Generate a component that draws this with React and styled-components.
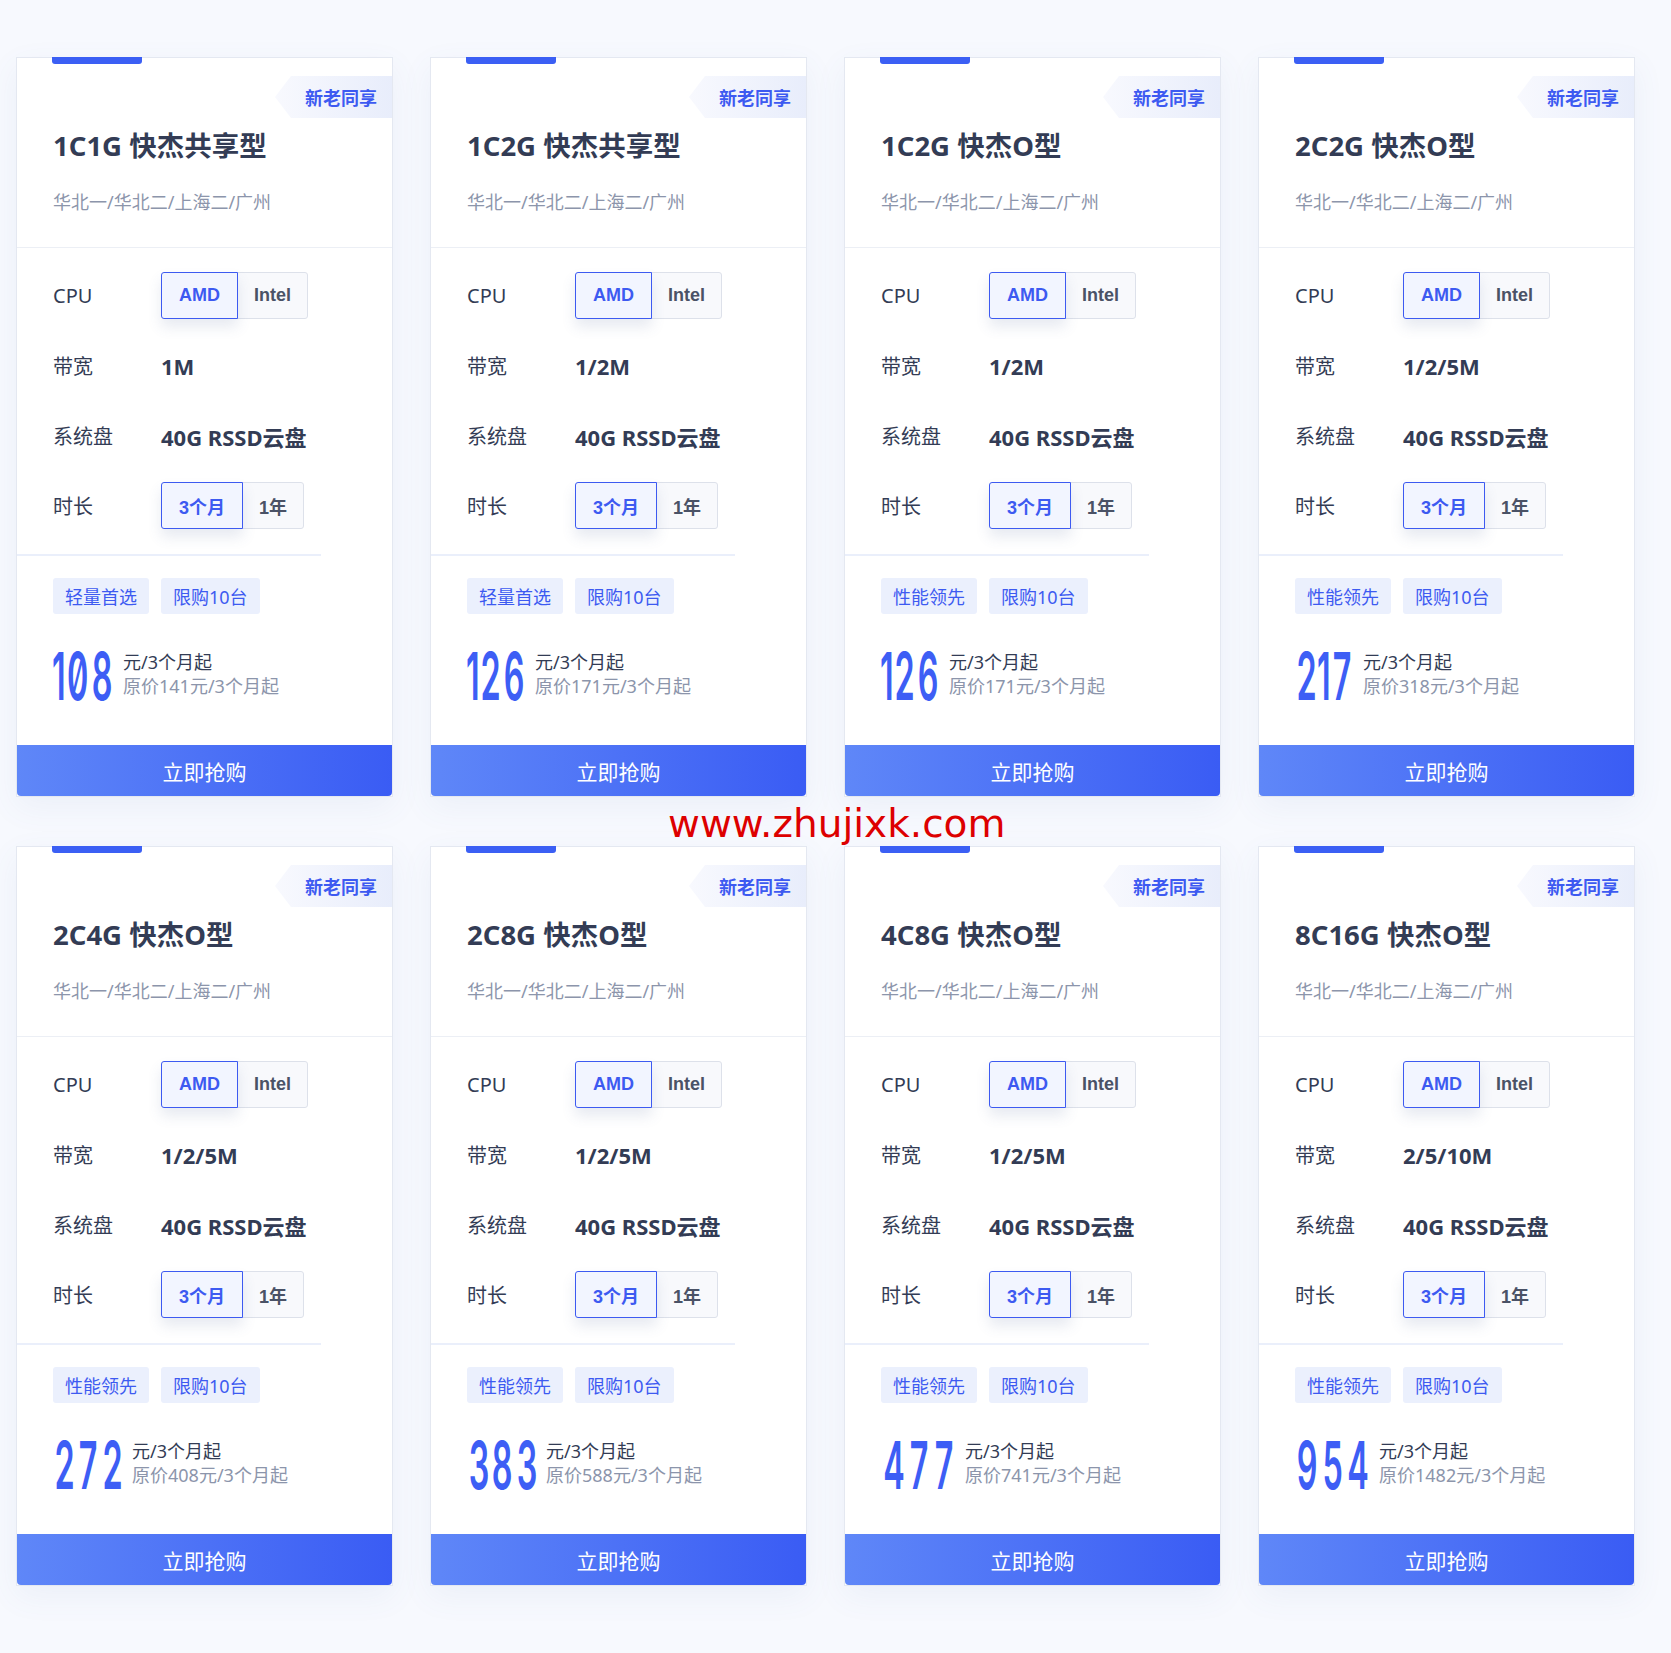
import React from 'react';
import styled, { createGlobalStyle } from 'styled-components';

const GlobalStyle = createGlobalStyle`
  html, body {
    margin: 0;
    padding: 0;
    background: #f7f9fe;
  }
  body {
    font-family: "Noto Sans", "Noto Sans CJK SC", sans-serif;
    color: #333c55;
  }
`;

const Page = styled.div`
  position: relative;
  width: 1671px;
  min-height: 1653px;
  box-sizing: border-box;
  padding: 57px 0 67px 16px;
`;

const Grid = styled.div`
  display: grid;
  grid-template-columns: repeat(4, 377px);
  column-gap: 37px;
  row-gap: 49px;
`;

const Card = styled.div`
  position: relative;
  height: 740px;
  box-sizing: border-box;
  display: flex;
  flex-direction: column;
  background: #fff;
  border: 1px solid #e4e8f1;
  box-shadow: 0 10px 30px rgba(90, 110, 170, 0.07);
`;

const TopBar = styled.div`
  position: absolute;
  top: -1px;
  left: 35px;
  width: 90px;
  height: 7px;
  background: #3b5ff4;
  border-radius: 0 0 3px 3px;
`;

const Badge = styled.div`
  position: absolute;
  top: 18px;
  right: 0;
  width: 117px;
  height: 42px;
  box-sizing: border-box;
  padding-left: 30px;
  display: flex;
  align-items: center;
  font-size: 18px;
  font-weight: 700;
  color: #3d5af1;
  background: linear-gradient(90deg, #f8f9fe 0%, #e8edfb 100%);
  clip-path: polygon(16px 0, 100% 0, 100% 100%, 16px 100%, 0 50%);
`;

const Header = styled.div`
  padding: 70px 36px 33px;
  border-bottom: 1px solid #eceff5;
`;

const Title = styled.h3`
  margin: 0;
  font-size: 27.5px;
  line-height: 36px;
  font-weight: 700;
  color: #333c55;
`;

const Regions = styled.div`
  margin-top: 26px;
  font-size: 18px;
  line-height: 24px;
  color: #8c95ab;
`;

const Specs = styled.div`
  display: grid;
  row-gap: 23px;
  padding: 24px 36px 25px;
`;

const SpecRow = styled.div`
  display: flex;
  align-items: center;
  height: 47px;
`;

const Label = styled.div`
  width: 108px;
  font-size: 20px;
  color: #333c55;
`;

const Value = styled.div`
  font-size: 22px;
  font-weight: 700;
  color: #333c55;
`;

const Segment = styled.div`
  display: flex;
  height: 47px;
`;

const SegItem = styled.div`
  position: relative;
  z-index: ${(p) => (p.$active ? 1 : 0)};
  width: ${(p) => p.$w}px;
  box-sizing: border-box;
  display: flex;
  align-items: center;
  justify-content: center;
  font-family: "Liberation Sans", "Noto Sans CJK SC", sans-serif;
  font-size: 18px;
  font-weight: 700;
  border: 1px solid ${(p) => (p.$active ? '#3d5af1' : '#dde1ea')};
  background: ${(p) => (p.$active ? '#f2f5ff' : '#f8f9fc')};
  color: ${(p) => (p.$active ? '#3d5af1' : '#4a5266')};
  box-shadow: ${(p) => (p.$active ? '0 8px 14px rgba(70, 90, 150, 0.13)' : 'none')};
  border-radius: 3px 0 0 3px;

  & + & {
    margin-left: -1px;
    border-radius: 0 3px 3px 0;
  }
`;

const Rule = styled.div`
  width: 304px;
  height: 2px;
  background: #eaeffb;
`;

const Tags = styled.div`
  display: flex;
  gap: 12px;
  margin-top: 22px;
  padding: 0 36px;
`;

const Tag = styled.span`
  height: 36px;
  padding: 0 12px;
  display: inline-flex;
  align-items: center;
  font-size: 18px;
  color: #3d5af1;
  background: #ebf0fd;
  border-radius: 3px;
`;

const PriceRow = styled.div`
  display: flex;
  align-items: center;
  height: 66px;
  margin-top: 29px;
  padding-left: 36px;
`;

const Amount = styled.div`
  display: flex;
  height: 66px;
`;

const Digit = styled.span`
  display: inline-flex;
  justify-content: center;
  width: ${(p) => p.$w}px;
  font-family: Inter, "Liberation Sans", sans-serif;
  font-feature-settings: "zero" 1;
  font-size: 66px;
  line-height: 66px;
  font-weight: 600;
  color: #3d5ef5;

  span {
    display: inline-block;
    transform: scaleX(0.49);
  }
`;

const PriceNote = styled.div`
  margin-left: 8px;
  margin-bottom: 5px;
  font-size: 18px;
  line-height: 24px;
  color: #333c55;

  small {
    display: block;
    font-size: 18px;
    color: #8c95ab;
  }
`;

const Buy = styled.button`
  margin-top: auto;
  height: 51px;
  width: 100%;
  border: none;
  border-radius: 0 0 4px 4px;
  background: linear-gradient(90deg, #5f87f8 0%, #3a5cf4 100%);
  color: #fff;
  font-family: inherit;
  font-size: 21px;
  cursor: pointer;
`;

const Watermark = styled.div`
  position: absolute;
  left: 668px;
  top: 804px;
  font-family: "DejaVu Sans", sans-serif;
  font-size: 39px;
  line-height: 1;
  color: #dd0000;
  pointer-events: none;
`;

const digitWidth = { 0: 25, 1: 12, 2: 23, 3: 23, 4: 26, 5: 25, 6: 25, 7: 25, 8: 25, 9: 25 };

const plans = [
  { name: '1C1G 快杰共享型', bw: '1M', tag: '轻量首选', price: '108', orig: '141' },
  { name: '1C2G 快杰共享型', bw: '1/2M', tag: '轻量首选', price: '126', orig: '171' },
  { name: '1C2G 快杰O型', bw: '1/2M', tag: '性能领先', price: '126', orig: '171' },
  { name: '2C2G 快杰O型', bw: '1/2/5M', tag: '性能领先', price: '217', orig: '318' },
  { name: '2C4G 快杰O型', bw: '1/2/5M', tag: '性能领先', price: '272', orig: '408' },
  { name: '2C8G 快杰O型', bw: '1/2/5M', tag: '性能领先', price: '383', orig: '588' },
  { name: '4C8G 快杰O型', bw: '1/2/5M', tag: '性能领先', price: '477', orig: '741' },
  { name: '8C16G 快杰O型', bw: '2/5/10M', tag: '性能领先', price: '954', orig: '1482' },
];

const PlanCard = ({ plan }) => (
  <Card>
    <TopBar />
    <Badge>新老同享</Badge>
    <Header>
      <Title>{plan.name}</Title>
      <Regions>华北一/华北二/上海二/广州</Regions>
    </Header>
    <Specs>
      <SpecRow>
        <Label>CPU</Label>
        <Segment>
          <SegItem $active $w={77}>AMD</SegItem>
          <SegItem $w={71}>Intel</SegItem>
        </Segment>
      </SpecRow>
      <SpecRow>
        <Label>带宽</Label>
        <Value>{plan.bw}</Value>
      </SpecRow>
      <SpecRow>
        <Label>系统盘</Label>
        <Value>40G RSSD云盘</Value>
      </SpecRow>
      <SpecRow>
        <Label>时长</Label>
        <Segment>
          <SegItem $active $w={82}>3个月</SegItem>
          <SegItem $w={62}>1年</SegItem>
        </Segment>
      </SpecRow>
    </Specs>
    <Rule />
    <Tags>
      <Tag>{plan.tag}</Tag>
      <Tag>限购10台</Tag>
    </Tags>
    <PriceRow>
      <Amount>
        {plan.price.split('').map((d, i) => (
          <Digit key={i} $w={digitWidth[d]}>
            <span>{d}</span>
          </Digit>
        ))}
      </Amount>
      <PriceNote>
        元/3个月起
        <small>原价{plan.orig}元/3个月起</small>
      </PriceNote>
    </PriceRow>
    <Buy>立即抢购</Buy>
  </Card>
);

const App = () => {
  return (
    <>
      <GlobalStyle />
      <Page>
        <Grid>
          {plans.map((p, i) => (
            <PlanCard key={i} plan={p} />
          ))}
        </Grid>
        <Watermark>www.zhujixk.com</Watermark>
      </Page>
    </>
  );
};

export default App;
